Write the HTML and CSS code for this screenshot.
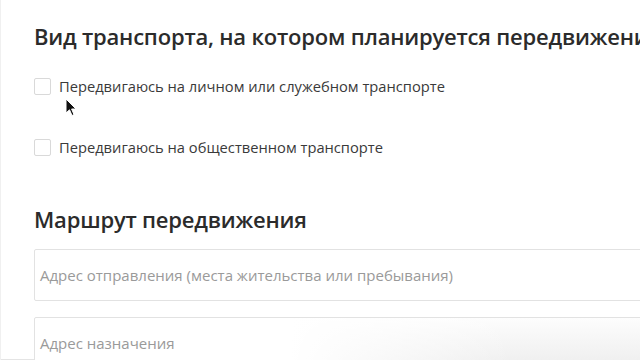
FILE: index.html
```html
<!DOCTYPE html>
<html lang="ru">
<head>
<meta charset="utf-8">
<link rel="stylesheet" href="styles.css">
</head>
<body>
<div class="page">
  <section class="block">
    <h2 class="title">Вид транспорта, на котором планируется передвижение</h2>
    <div class="options">
      <label class="option"><span class="box"></span><span class="label-text">Передвигаюсь на личном или служебном транспорте</span></label>
      <label class="option"><span class="box"></span><span class="label-text">Передвигаюсь на общественном транспорте</span></label>
    </div>
  </section>
  <section class="block route">
    <h2 class="title">Маршрут передвижения</h2>
    <div class="fields">
      <div class="field"><span class="placeholder">Адрес отправления (места жительства или пребывания)</span></div>
      <div class="field field-shaded"><span class="placeholder">Адрес назначения</span></div>
    </div>
  </section>
  <svg class="cursor" width="12" height="19" viewBox="0 0 12 19"><path d="M1 1 L1 15 L4.5 11.8 L7 17.5 L9 16.6 L6.6 11 L11 11 Z" fill="#111" stroke="#fff" stroke-width="1"/></svg>
</div>
</body>
</html>
```

FILE: styles.css
```css
* { box-sizing: border-box; }
html, body { margin: 0; padding: 0; background: #fff; }
body { width: 640px; height: 360px; overflow: hidden; font-family: "Open Sans", "Noto Sans", sans-serif; }
.page {
  position: relative;
  height: 360px;
  padding: 21px 0 0 34px;
  box-shadow: inset 1px 0 0 #f0f0f0, inset 0 -1px 0 #e4e4e4;
  overflow: hidden;
}
.title {
  margin: 0;
  font-size: 22px;
  font-weight: 600;
  line-height: 30px;
  letter-spacing: -0.2px;
  color: #2b2b2b;
  white-space: nowrap;
}
.options { display: flex; flex-direction: column; gap: 44px; margin-top: 27px; }
.option { display: flex; align-items: center; gap: 8px; height: 17px; }
.box {
  width: 17px; height: 17px; flex: none;
  border: 1px solid #d9d9d9; border-radius: 2px; background: #fff;
}
.label-text { font-size: 14.7px; color: #3a3a3a; line-height: 17px; }
.route { margin-top: 48px; }
.fields { display: flex; flex-direction: column; gap: 16px; margin-top: 15px; }
.field {
  height: 52px; width: 640px;
  border: 1px solid #e2e2e2; border-radius: 2px;
  display: flex; align-items: center; padding-left: 5px;
}
.field-shaded {
  background: linear-gradient(to right, #fff 40%, rgba(255,255,255,0) 75%),
              linear-gradient(to bottom, #fdfdfd 0%, #ededed 100%);
}
.placeholder { font-size: 15px; color: #9a9a9a; }
.cursor { position: absolute; left: 65px; top: 98px; }
```
